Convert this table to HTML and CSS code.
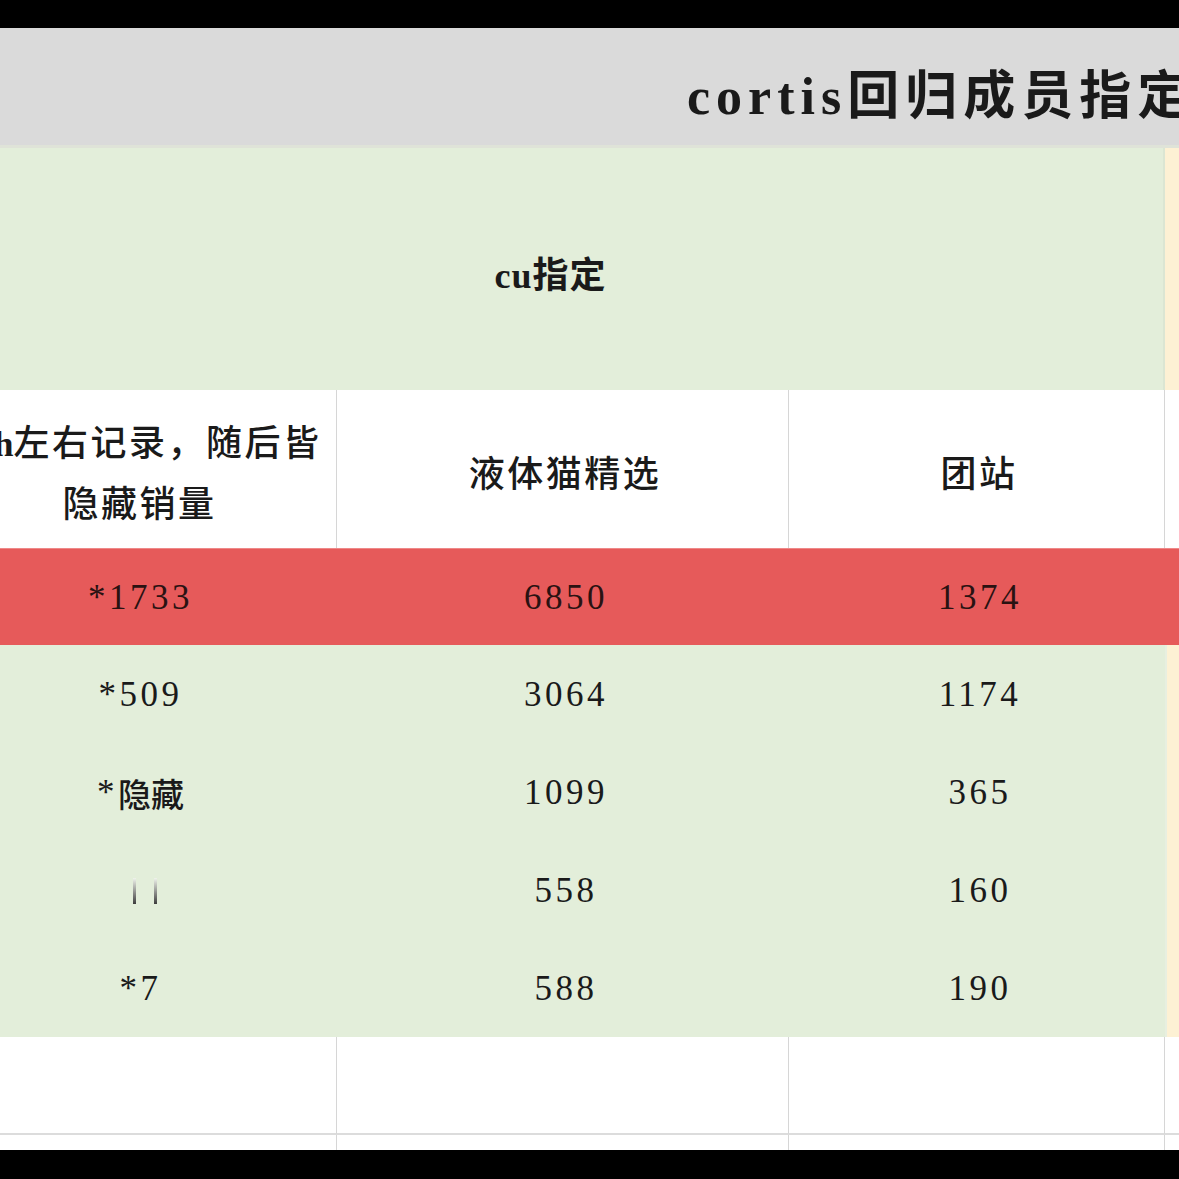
FILE: index.html
```html
<!DOCTYPE html>
<html lang="zh">
<head>
<meta charset="utf-8">
<title>cortis回归成员指定</title>
<link rel="stylesheet" href="styles.css">
</head>
<body>
<div class="screen">
  <div class="sheet">
    <div class="title">cortis回归成员指定</div>
    <div class="cu">cu指定</div>
    <div class="side-yellow"></div>

    <div class="cell head"><span><span class="latin">24h</span>左右记录，随后皆<br>隐藏销量</span></div>
    <div class="cell head">液体猫精选</div>
    <div class="cell head">团站</div>
    <div class="cell head last"></div>

    <div class="cell red num">*1733</div>
    <div class="cell red num">6850</div>
    <div class="cell red num">1374</div>
    <div class="cell red last"></div>

    <div class="cell green num">*509</div>
    <div class="cell green num">3064</div>
    <div class="cell green num">1174</div>
    <div class="cell yellow"></div>

    <div class="cell green num">*<span class="cjk">隐藏</span></div>
    <div class="cell green num">1099</div>
    <div class="cell green num">365</div>
    <div class="cell yellow"></div>

    <div class="cell green num"><span class="bars"><i></i><i></i></span></div>
    <div class="cell green num">558</div>
    <div class="cell green num">160</div>
    <div class="cell yellow"></div>

    <div class="cell green num">*7</div>
    <div class="cell green num">588</div>
    <div class="cell green num">190</div>
    <div class="cell yellow"></div>

    <div class="cell blank"></div>
    <div class="cell blank"></div>
    <div class="cell blank"></div>
    <div class="cell blank last"></div>

    <div class="cell blank"></div>
    <div class="cell blank"></div>
    <div class="cell blank"></div>
    <div class="cell blank last"></div>
  </div>
</div>
</body>
</html>
```

FILE: styles.css
```css
html, body {
  margin: 0;
  padding: 0;
  background: #000;
}

body {
  width: 1179px;
  height: 1179px;
  overflow: hidden;
  padding-top: 28px;
  box-sizing: border-box;
}

.screen {
  height: 1122px;
  overflow: hidden;
  background: #fff;
}

.sheet {
  margin-left: -62px;
  display: grid;
  grid-template-columns: 399px 452px 376px 1fr;
  grid-template-rows: 120px 242px 158px 97px 98px 98px 98px 98px 98px 98px;
  font-family: "Liberation Serif", "Noto Sans CJK SC", serif;
  color: #1a1a1a;
}

.title {
  grid-column: 1 / 5;
  background: #dadada;
  border-bottom: 3px solid #dfe3d8;
  box-sizing: border-box;
  font-size: 52px;
  font-weight: 700;
  letter-spacing: 6px;
  white-space: nowrap;
  overflow: hidden;
  padding-left: 749px;
  padding-top: 10px;
  display: flex;
  align-items: center;
  font-family: "Liberation Serif", "Noto Sans CJK SC", serif;
}

.cu {
  grid-column: 1 / 4;
  background: #e3eeda;
  border-right: 2px solid #dbe6d3;
  display: flex;
  align-items: center;
  justify-content: center;
  font-size: 36px;
  font-weight: 700;
  letter-spacing: 1px;
  padding-top: 6px;
  box-sizing: border-box;
}

.side-yellow {
  background: #fdf1d4;
}

.cell {
  display: flex;
  align-items: center;
  justify-content: center;
  text-align: center;
  box-sizing: border-box;
}

.head {
  background: #fff;
  border-right: 1px solid #d6d6d6;
  font-family: "Noto Sans CJK SC", sans-serif;
  font-weight: 500;
  font-size: 36px;
  line-height: 57px;
  letter-spacing: 2.5px;
  padding-top: 4px;
  padding-left: 5px;
}

.head .latin {
  font-family: "Liberation Serif", serif;
  font-weight: 700;
  letter-spacing: 0;
}

.head.last {
  border-right: none;
}

.num {
  font-size: 35px;
  letter-spacing: 3.5px;
  padding-top: 2px;
  padding-left: 6px;
}

.cjk {
  font-family: "Noto Sans CJK SC", sans-serif;
  font-size: 33px;
  font-weight: 500;
  letter-spacing: 0;
}

.red {
  background: #e65a5a;
  color: #2a1212;
  border-top: 1px solid #e88;
}

.green {
  background: #e3eeda;
}

.yellow {
  background: #fdf1d4;
  border-left: 2px solid #e8efe0;
}

.bars {
  display: flex;
  gap: 18px;
  padding-left: 8px;
}

.bars i {
  display: block;
  width: 3px;
  height: 26px;
  background: linear-gradient(#f0f4ec, #3d3d3d);
}

.blank {
  background: #fff;
  border-right: 1px solid #d6d6d6;
  border-bottom: 2px solid #dcdcdc;
}

.blank.last {
  border-right: none;
}
```
